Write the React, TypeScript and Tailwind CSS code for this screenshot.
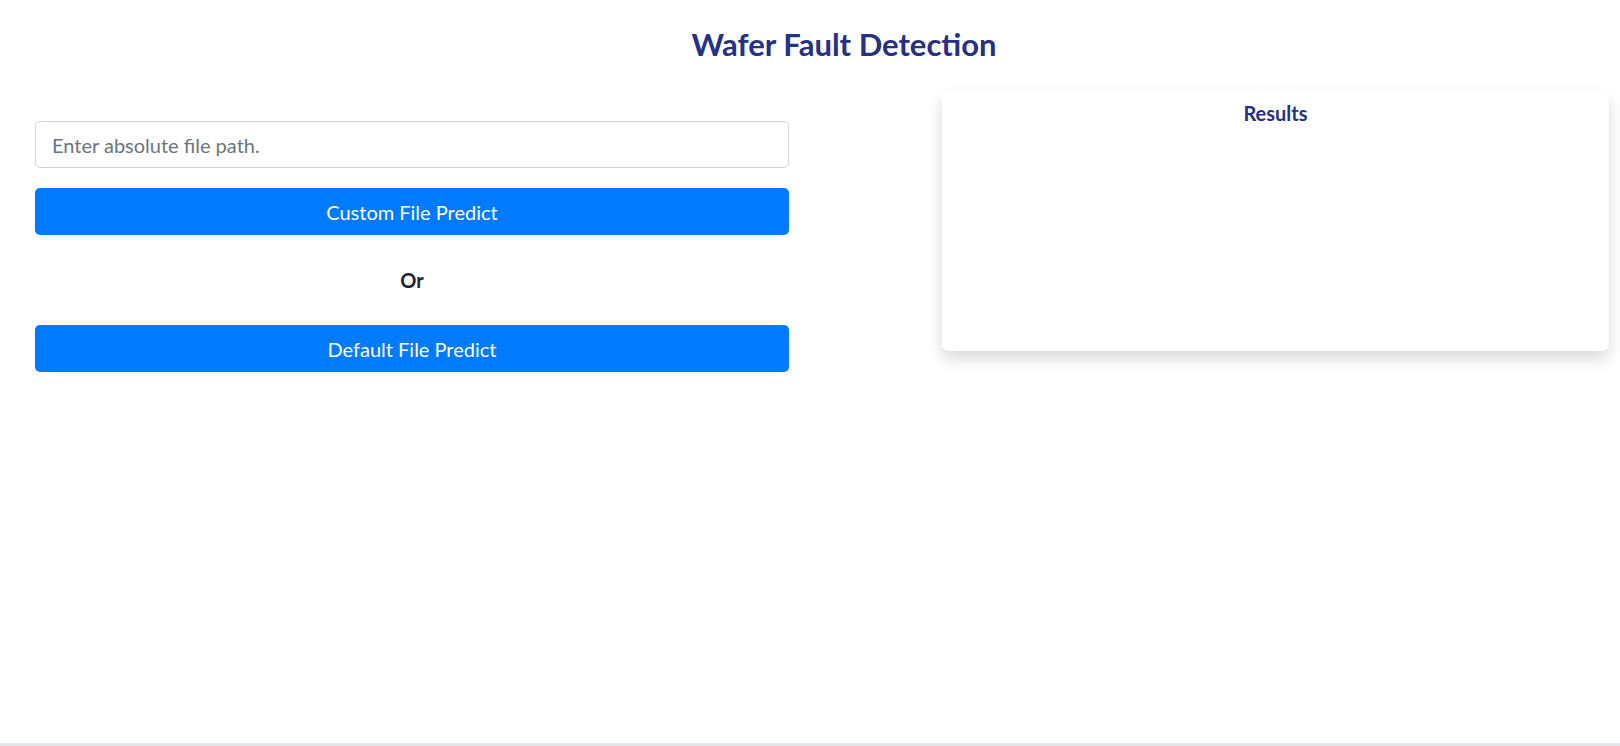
export default function App() {
    return (
        <div className="h-[746px] flex flex-col bg-white font-['Lato','Noto_Sans',sans-serif] overflow-hidden">
            <h2 className="pt-[25px] pl-[68px] text-center text-[31px] leading-[38px] font-bold text-[#253185]">Wafer Fault Detection</h2>
            <div className="flex items-start mt-[28px]">
                <div className="ml-[35px] w-[754px] pt-[30px] flex flex-col">
                    <input
                        type="text"
                        placeholder="Enter absolute file path."
                        className="h-[47px] w-full border border-[#ced4da] rounded-[5px] px-4 text-[20px] text-[#495057] placeholder:text-[#6c757d] outline-none"
                    />
                    <button className="mt-[20px] h-[47px] w-full rounded-[5px] bg-[#007bff] text-white text-[20px]">Custom File Predict</button>
                    <p className="mt-[31px] text-center text-[20px] leading-[28px] font-bold text-[#212529]">Or</p>
                    <button className="mt-[31px] h-[47px] w-full rounded-[5px] bg-[#007bff] text-white text-[20px]">Default File Predict</button>
                </div>
                <div className="ml-[153px] w-[667px] h-[260px] rounded-[7px] bg-white shadow-[0_8px_16px_rgba(0,0,0,0.15)]">
                    <h5 className="pt-[10px] text-center text-[20px] leading-[24px] font-bold text-[#253185]">Results</h5>
                </div>
            </div>
            <div className="mt-auto h-[3px] bg-[#e3e6ea]"></div>
        </div>
    )
}
